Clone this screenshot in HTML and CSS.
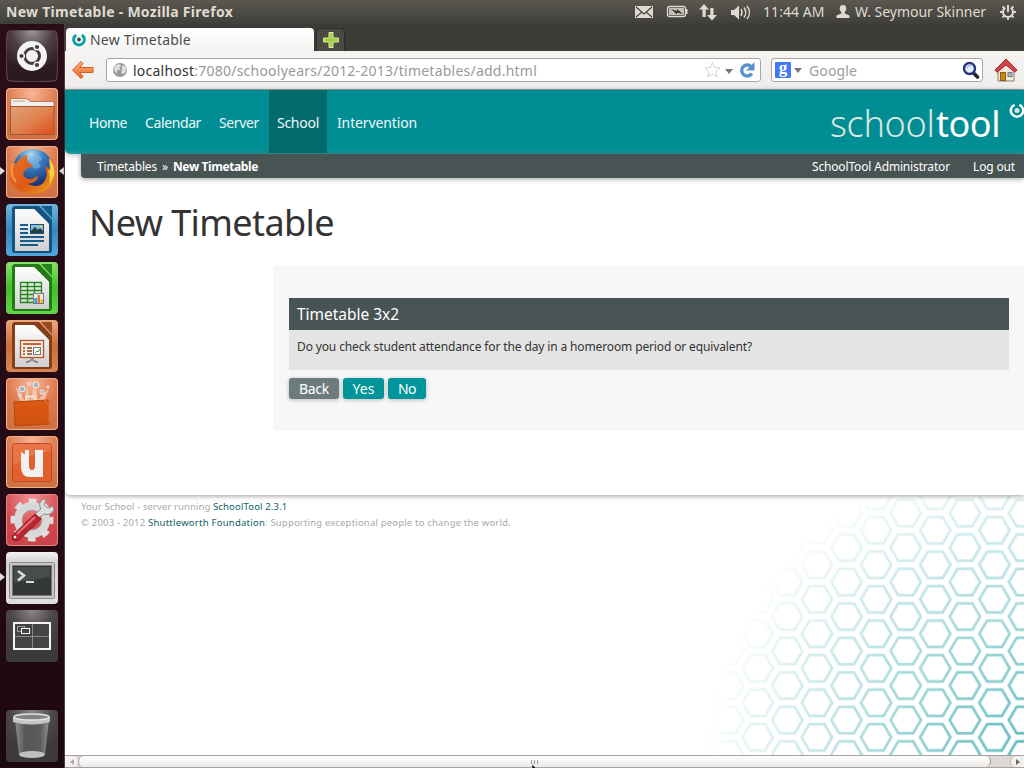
FILE: index.html
```
<!DOCTYPE html>
<html lang="en">
<head>
<meta charset="utf-8">
<title>New Timetable</title>
<link rel="stylesheet" href="styles.css">
</head>
<body>
<svg class="defs" width="0" height="0" aria-hidden="true">
  <defs>
    <radialGradient id="orange" cx=".5" cy=".1" r=".95"><stop offset="0" stop-color="#f9b594"/><stop offset=".5" stop-color="#dd7b50"/><stop offset="1" stop-color="#cf7040"/></radialGradient>
    <radialGradient id="dark" cx=".5" cy="0" r=".8"><stop offset="0" stop-color="#8c8686"/><stop offset=".5" stop-color="#4b4848"/><stop offset="1" stop-color="#3c3a3a"/></radialGradient>
    <radialGradient id="dash" cx=".5" cy="0" r=".8"><stop offset="0" stop-color="#a19a9b"/><stop offset=".5" stop-color="#4c3f42"/><stop offset="1" stop-color="#2b1b1f"/></radialGradient>
    <linearGradient id="blue" x2="0" y2="1"><stop offset="0" stop-color="#6fb5df"/><stop offset=".5" stop-color="#3689bd"/><stop offset="1" stop-color="#4fa8dc"/></linearGradient>
    <linearGradient id="green" x2="0" y2="1"><stop offset="0" stop-color="#8be36d"/><stop offset=".5" stop-color="#43bd2b"/><stop offset="1" stop-color="#62d448"/></linearGradient>
    <linearGradient id="brown" x2="0" y2="1"><stop offset="0" stop-color="#eba77e"/><stop offset=".5" stop-color="#c96f3d"/><stop offset="1" stop-color="#d98553"/></linearGradient>
    <radialGradient id="red" cx=".5" cy=".1" r=".95"><stop offset="0" stop-color="#f29391"/><stop offset=".6" stop-color="#d14a50"/><stop offset="1" stop-color="#c9424a"/></radialGradient>
    <linearGradient id="silver" x2="0" y2="1"><stop offset="0" stop-color="#f3f3f3"/><stop offset=".2" stop-color="#d4d4d4"/><stop offset="1" stop-color="#e0e0e0"/></linearGradient>
    <linearGradient id="paper" x2="0" y2="1"><stop offset="0" stop-color="#ffffff"/><stop offset="1" stop-color="#cfcfcf"/></linearGradient>
    <linearGradient id="folder" x2="1" y2="1"><stop offset="0" stop-color="#dfa078"/><stop offset=".5" stop-color="#e08250"/><stop offset="1" stop-color="#dc4e1c"/></linearGradient>
    <linearGradient id="bag" x2="0" y2="1"><stop offset="0" stop-color="#dc5a14"/><stop offset="1" stop-color="#d05010"/></linearGradient>
    <radialGradient id="globe" cx=".45" cy=".15" r=".8"><stop offset="0" stop-color="#b5dcf2"/><stop offset=".4" stop-color="#3a7cc0"/><stop offset="1" stop-color="#142b6b"/></radialGradient>
    <linearGradient id="fox" x2="1" y2="1"><stop offset="0" stop-color="#e8702a"/><stop offset=".55" stop-color="#dd5a15"/><stop offset="1" stop-color="#f2a623"/></linearGradient>
    <linearGradient id="bin" x2="1" y2="0"><stop offset="0" stop-color="#8f8f8f"/><stop offset=".3" stop-color="#565656"/><stop offset=".75" stop-color="#5d5d5d"/><stop offset="1" stop-color="#929292"/></linearGradient>
    <linearGradient id="arrow" x2="0" y2="1"><stop offset="0" stop-color="#fbb471"/><stop offset="1" stop-color="#e8672c"/></linearGradient>
  </defs>
</svg>
<div class="screen">
  <header class="panel">
    <span class="panel-title">New Timetable - Mozilla Firefox</span>
    <svg class="tray" width="120" height="24" viewBox="634 0 120 24">
      <rect x="635" y="6" width="18" height="12" fill="#dfdbd2"/><path d="M636 7l8 7 8-7M636 17l6-5M652 17l-6-5" fill="none" stroke="#45433c" stroke-width="1.2"/>
      <rect x="667.5" y="6.500" width="18" height="10" rx="2" fill="none" stroke="#dfdbd2" stroke-width="1.3"/><rect x="669" y="8" width="15" height="7" fill="#c4c0b7"/><path d="M686 9h1.500v5H686" fill="#dfdbd2"/><path d="M671 9l6 2v-2l6 5-6-1.500v2z" fill="#33322e"/>
      <path d="M704 4l5 5.500h-3.300V17h-3.200V9.500h-3.500zM712 20.500l-5-5.500h3.300V8h3.200v7h3.500z" fill="#dfdbd2"/>
      <path d="M731 10h3l5-4.500v14l-5-4.500h-3z" fill="#dfdbd2"/><path d="M741 9q2 3.500 0 7M744 7.500q3.500 5 0 10M747 6q5 6.500 0 13" fill="none" stroke="#dfdbd2" stroke-width="1.400"/>
    </svg>
    <span class="clock">11:44 AM</span>
    <svg class="person" width="14" height="24" viewBox="0 0 14 24"><path d="M7 5c2.300 0 3.500 1.600 3.300 3.800-.2 1.700-1 2.700-1.600 3.300v1.500L13.500 15.500V18H.5v-2.500l4.800-1.900v-1.500C4.700 11.500 3.900 10.500 3.700 8.800 3.500 6.600 4.700 5 7 5z" fill="#dfdbd2"/></svg>
    <span class="user">W. Seymour Skinner</span>
    <svg class="gear" width="16" height="24" viewBox="0 0 16 24"><path d="M5.300 7.800a5 5 0 1 0 5.400 0" fill="none" stroke="#dfdbd2" stroke-width="2"/><path d="M8 5v7" stroke="#dfdbd2" stroke-width="2"/><path d="M8 17v3M0 12h3M13 12h3M2.500 6.500l2 2M13.500 6.500l-2 2M2.500 17.500l2-2M13.500 17.500l-2-2" stroke="#dfdbd2" stroke-width="1.800"/></svg>
  </header>

  <div class="desktop">
    <nav class="launcher">
      <svg class="tile" viewBox="0 0 52 52"><path d="M4 1Q26-1 48 1Q51 1 51 4Q53 26 51 48Q51 51 48 51Q26 53 4 51Q1 51 1 48Q-1 26 1 4Q1 1 4 1Z" fill="url(#dash)" stroke="#5b5054"/><circle cx="26" cy="26" r="15" fill="#f3f3f3"/><circle cx="26" cy="26" r="7.500" fill="none" stroke="#47393c" stroke-width="3"/><g stroke="#f3f3f3" stroke-width="1.500"><circle cx="15.500" cy="26" r="2.800" fill="#47393c"/><circle cx="31" cy="17" r="2.800" fill="#47393c"/><circle cx="31" cy="35" r="2.800" fill="#47393c"/></g></svg>
      <svg class="tile" viewBox="0 0 52 52"><rect width="52" height="52" rx="4" fill="url(#orange)"/><rect x=".5" y=".5" width="51" height="51" rx="4" fill="none" stroke="#f3b18d"/><path d="M4.500 47V12q0-1.500 1.500-1.500h14l5 3H47q1 0 1 1.500v32z" fill="#efefef" stroke="#b97b5b"/><path d="M7 13h12" stroke="#e09a73"/><rect x="4.500" y="18.500" width="43.500" height="28" fill="url(#folder)" stroke="#a5552e"/></svg>
      <svg class="tile" viewBox="0 0 52 52"><rect width="52" height="52" rx="4" fill="url(#orange)"/><rect x=".5" y=".5" width="51" height="51" rx="4" fill="none" stroke="#f3b18d"/><circle cx="27" cy="23" r="20" fill="url(#globe)"/><path d="M25 10q8-2 11 3l-4 3 3 5-6 2-5-4z" fill="#7fb6dc" opacity=".6"/><path d="M43 12Q50 20 49 29Q46 47 28 48Q10 48 4 34Q2 25 7 15L10 18Q14 11 21 9L21 15L27 20L20 23L17 28Q19 34 26 33L32 30Q32 36 22 38Q32 43 38 36Q43 29 39 20L44 23Q44 16 43 12Z" fill="url(#fox)"/><path d="M43 12q7 9 5 18l-5 10q2-9-1-16l2 1q0-6-1-13z" fill="#f5cf3d"/><path d="M7 17q-4 11 3 19" fill="none" stroke="#f39b41" stroke-width="2"/></svg>
      <svg class="tile" viewBox="0 0 52 52"><rect width="52" height="52" rx="4" fill="url(#blue)"/><path d="M8 2h25l13 14v30q0 3-3 3H9q-3 0-3-3V4z" fill="#155280"/><path d="M35 2h11v12z" fill="#155b8b"/><path d="M9 5h19l15 15v27H9z" fill="url(#paper)"/><path d="M28 5l15 15-11-7z" fill="#f7fafc"/><path d="M14 21h8M14 25h8M14 29h8M14 33h24M14 37h24M14 41h18" stroke="#155b8b" stroke-width="2"/><rect x="24.500" y="20.500" width="13" height="9" fill="#80bde3" stroke="#155280"/><path d="M25 29v-2l4-4 3 3 2-2 3 3v2z" fill="#293b42"/><circle cx="35" cy="22.500" r="1.500" fill="#efc75e"/></svg>
      <svg class="tile" viewBox="0 0 52 52"><rect width="52" height="52" rx="4" fill="url(#green)"/><path d="M8 2h25l13 14v30q0 3-3 3H9q-3 0-3-3V4z" fill="#217a16"/><path d="M35 2h11v12z" fill="#27841a"/><path d="M9 5h19l15 15v27H9z" fill="url(#paper)"/><path d="M28 5l15 15-11-7z" fill="#f7fcf7"/><path d="M14.500 20.500h21v20h-21zM14 24.500h22M14 28.500h22M14 32.500h22M14 36.500h22M21.500 20v21M28.500 20v21" fill="none" stroke="#23881b" stroke-width="1.300"/><rect x="27.500" y="31.500" width="10" height="10" fill="#eee" stroke="#777"/><path d="M28.500 36h2.500v5h-2.500z" fill="#2b9fdf"/><path d="M31.500 33h2.500v8h-2.500z" fill="#d97b35"/><path d="M34.500 37.500H37V41h-2.500z" fill="#e8ba21"/></svg>
      <svg class="tile" viewBox="0 0 52 52"><rect width="52" height="52" rx="4" fill="url(#brown)"/><path d="M8 2h25l13 14v30q0 3-3 3H9q-3 0-3-3V4z" fill="#843f19"/><path d="M35 2h11v12z" fill="#96481e"/><path d="M9 5h19l15 15v27H9z" fill="url(#paper)"/><path d="M28 5l15 15-11-7z" fill="#fcfaf7"/><rect x="14.500" y="20.500" width="23" height="17" fill="#f5eee9" stroke="#b45325" stroke-width="1.300"/><path d="M17 24h18" stroke="#bd5424" stroke-width="1.800"/><path d="M17 28h2M17 31h2M17 34h2M21 28h5M21 31h5M21 34h5" stroke="#913f18" stroke-width="1.700"/><rect x="27.500" y="27.500" width="7" height="7" fill="#fff" stroke="#777"/><path d="M29 33l2-2 1 1 2-3" fill="none" stroke="#27a33a"/><path d="M20 42q5 0 6-4q1 4 6 4" fill="none" stroke="#888" stroke-width="1.800"/></svg>
      <svg class="tile" viewBox="0 0 52 52"><rect width="52" height="52" rx="4" fill="url(#orange)"/><rect x=".5" y=".5" width="51" height="51" rx="4" fill="none" stroke="#f3b18d"/><path d="M9 7l10 16 2-15 3 15L29 5l3 17 11-12-5 14H14z" fill="#f8d3ba" opacity=".7"/><g fill="#9fb9c4" stroke="#f4f0ee"><circle cx="16" cy="11" r="3"/><circle cx="30" cy="7" r="3"/><circle cx="23" cy="6" r="1.500"/><circle cx="36" cy="14" r="2"/><circle cx="14" cy="17" r="1.500"/><circle cx="42" cy="9" r="1"/></g><path d="M20 23v-4.500h9V23" fill="none" stroke="#f5e2d4" stroke-width="2"/><path d="M8 24l34-2 1 24-34 2z" fill="url(#bag)" stroke="#b9460d"/><path d="M39 22l4 6v17" fill="none" stroke="#e47a42"/></svg>
      <svg class="tile" viewBox="0 0 52 52"><rect width="52" height="52" rx="4" fill="url(#orange)"/><rect x=".5" y=".5" width="51" height="51" rx="4" fill="none" stroke="#f3b18d"/><rect x="6.500" y="7.500" width="39" height="38" rx="2" fill="#e45f2e" stroke="#b94c24"/><path d="M7 8h38v7Q25 17 7 30z" fill="#f18a5f" opacity=".5"/><path d="M15 16l5-2h3v16q0 4 3 4t3-4V14h8v27H24q-9 0-9-10z" fill="#f1f1f1"/><path d="M15 16l4 2.500V14z" fill="#e9703f"/></svg>
      <svg class="tile" viewBox="0 0 52 52"><rect width="52" height="52" rx="4" fill="url(#red)"/><rect x=".5" y=".5" width="51" height="51" rx="4" fill="none" stroke="#e98785"/><circle cx="26" cy="26" r="14" fill="none" stroke="#d8d8d8" stroke-width="8"/><circle cx="26" cy="26" r="19" fill="none" stroke="#dedede" stroke-width="5" stroke-dasharray="7.460 7.460" stroke-dashoffset="3.700"/><circle cx="26" cy="26" r="10" fill="none" stroke="#aaa"/><path d="M31 25L28 21 35 15q-4-7 3-10l2 1-2 5 4 3 5-2 1 4q-3 6-10 4z" fill="#ddd" stroke="#8a8a8a"/><path d="M7 41L29 20l6 5-22 21q-4 2-6 0-2-2 0-5z" fill="#b82834" stroke="#8b1824"/><path d="M11 40L29 23" stroke="#e5707a" stroke-width="2"/><circle cx="9" cy="43" r="1.300" fill="#fff"/></svg>
      <svg class="tile" viewBox="0 0 52 52"><rect width="52" height="52" rx="4" fill="url(#silver)"/><rect x="3.500" y="10.500" width="45" height="36" rx="1" fill="#c6c6c6" stroke="#888"/><rect x="6.500" y="13.500" width="39" height="30" fill="#333736" stroke="#777"/><path d="M8 15h36v10L8 31z" fill="#5b5f5e" opacity=".55"/><path d="M12 19l6 4.500-6 5" fill="none" stroke="#ddd" stroke-width="2.600"/><path d="M20 30h8" stroke="#ddd" stroke-width="2"/></svg>
      <svg class="tile" viewBox="0 0 52 52"><rect width="52" height="52" rx="4" fill="url(#dark)"/><rect x="8" y="13" width="36" height="26" fill="#454343" stroke="#f4f4f4" stroke-width="2"/><path d="M26.500 14v24M9 26.500h34" stroke="#898989"/><rect x="11.500" y="16.500" width="7" height="5" fill="none" stroke="#999"/><rect x="15.500" y="18.500" width="8" height="5" fill="#454343" stroke="#f4f4f4"/></svg>
      <svg class="tile tile-trash" viewBox="0 0 52 52"><rect width="52" height="52" rx="4" fill="url(#dark)"/><path d="M9 9l4 36q13 5 26 0l4-36z" fill="url(#bin)"/><ellipse cx="26" cy="44.500" rx="13" ry="3.500" fill="#bfc0be"/><path d="M7 7v5q19 5 37 0V7z" fill="#c4c4c4"/><ellipse cx="25.500" cy="7" rx="17.500" ry="3" fill="#848484" stroke="#e2e2e2" stroke-width="1.500"/></svg>
      <i class="pip pip-firefox"></i><i class="pip pip-focus"></i><i class="pip pip-terminal"></i>
    </nav>

    <div class="browser">
      <div class="tabs">
        <div class="tab">
          <svg width="16" height="16" viewBox="0 0 16 16"><path d="M5.200 3A5.400 5.400 0 1 0 10.800 3" fill="none" stroke="#0ba3a8" stroke-width="3"/><circle cx="8" cy="7.500" r="2" fill="#414949"/></svg>
          <span class="tab-title">New Timetable</span>
        </div>
        <div class="tab-add"><svg width="18" height="18" viewBox="0 0 18 18"><path d="M7 1.500h4V7h5.500v4H11v5.500H7V11H1.500V7H7z" fill="#a7ce3c" stroke="#dcecae" stroke-width="1"/></svg></div>
      </div>
      <div class="toolbar">
        <svg class="back" width="24" height="20" viewBox="0 0 24 20"><path d="M10 1.500L1.500 10l8.500 8.500 2-2-3.500-4h13.500v-5H8.500l3.500-4z" fill="url(#arrow)" stroke="#d65c28" stroke-linejoin="round"/></svg>
        <div class="field url">
          <svg width="16" height="16" viewBox="0 0 16 16"><circle cx="8" cy="8" r="7" fill="#999"/><path d="M2.500 4l4-2 3 1.500-2 2 1 2-3.500 1L5 12 2 8zM10 4l3-.5L14.500 8 12 12l-3-1 1-3z" fill="#dedede"/></svg>
          <span class="url-text"><b>localhost</b>:7080/schoolyears/2012-2013/timetables/add.html</span>
          <svg class="url-tools" width="54" height="22" viewBox="0 0 54 22"><path d="M8.500 3.500l2.200 5 5.300.5-4 3.600 1.200 5.400-4.700-2.800L3.800 18 5 12.600 1 9l5.300-.5z" fill="#fff" stroke="#d0d0d0"/><path d="M21 10h8l-4 5z" fill="#777"/><path d="M47 7.500A5.500 5.500 0 1 0 47.800 14.500" fill="none" stroke="#5794cc" stroke-width="3.400"/><path d="M50.500 3v8.500H42z" fill="#5794cc"/></svg>
        </div>
        <div class="field search">
          <span class="g">g</span><span class="chevron"></span><span class="search-text">Google</span>
          <svg class="lens" width="18" height="18" viewBox="0 0 18 18"><path d="M11 11.500l4.500 4.500" stroke="#26272d" stroke-width="3.600" stroke-linecap="round"/><circle cx="7.500" cy="7.500" r="5.500" fill="#e5eefb" stroke="#27377e" stroke-width="2.400"/><path d="M5 7q1-3 4-2" stroke="#7ea2dc" fill="none"/></svg>
        </div>
        <svg class="home" width="24" height="24" viewBox="0 0 24 24"><path d="M4 11l8-8 8 8v12H4z" fill="#efebe1" stroke="#8b7c6a"/><rect x="6.500" y="14.500" width="5" height="8" fill="#c8870f" stroke="#8f5c12"/><rect x="14" y="14.500" width="4" height="4" fill="#9db9cf" stroke="#777"/><path d="M12 1L1 12l2 2.300L12 7l9 7.300 2-2.300z" fill="#d24343" stroke="#a82c2c" stroke-linejoin="round"/></svg>
      </div>

      <div class="page">
        <main class="main">
          <div class="masthead">
            <div class="menu">
              <a class="m-home">Home</a><a class="m-cal">Calendar</a><a class="m-server">Server</a><a class="m-school">School</a><a class="m-int">Intervention</a>
            </div>
            <div class="logo"><span class="logo-a">school</span><span class="logo-b">tool</span><svg width="16" height="18" viewBox="0 0 16 18"><path d="M5.600 2.800A6.200 6.200 0 1 0 10.400 2.800" fill="none" stroke="#fff" stroke-width="2.400"/><circle cx="8" cy="8.500" r="2.500" fill="#dfe3de"/></svg></div>
          </div>
          <div class="crumbs">
            <span class="crumb">Timetables</span><span class="sep">»</span><b class="crumb-here">New Timetable</b>
            <span class="admin">SchoolTool Administrator</span><span class="logout">Log out</span>
          </div>
          <h1>New Timetable</h1>
          <section class="content">
            <h3>Timetable 3x2</h3>
            <p class="question">Do you check student attendance for the day in a homeroom period or equivalent?</p>
            <div class="buttons"><button class="btn btn-back">Back</button><button class="btn btn-yes">Yes</button><button class="btn btn-no">No</button></div>
          </section>
        </main>
        <footer class="footer">
          <div class="credits">
            <p><span class="f1">Your School - server running </span><a class="f2">SchoolTool 2.3.1</a></p>
            <p><span class="f3">© 2003 - 2012 </span><a class="f4">Shuttleworth Foundation</a><span class="f5">: Supporting exceptional people to change the world.</span></p>
          </div>
          <svg class="hexes" width="324" height="259" viewBox="0 0 324 259">
            <defs>
              <pattern id="hex" width="59.2" height="34.5" patternUnits="userSpaceOnUse" patternTransform="translate(205.7 17.05)">
                <g fill="none" stroke="#0a969c" stroke-width="2.700">
                  <path id="h" d="M14.400 17.250L22.200 3.950H37L44.800 17.250 37 30.550H22.200z"/>
                  <use href="#h" x="-29.6" y="-17.25"/><use href="#h" x="29.6" y="-17.25"/><use href="#h" x="-29.6" y="17.25"/><use href="#h" x="29.6" y="17.25"/>
                </g>
              </pattern>
              <radialGradient id="fade" gradientUnits="userSpaceOnUse" cx="350" cy="285" r="348"><stop offset="0" stop-color="#fff" stop-opacity=".74"/><stop offset=".5" stop-color="#fff" stop-opacity=".36"/><stop offset=".8" stop-color="#fff" stop-opacity=".15"/><stop offset="1" stop-color="#fff" stop-opacity="0"/></radialGradient>
              <mask id="m" mask-type="alpha"><rect width="324" height="259" fill="url(#fade)"/></mask>
            </defs>
            <rect width="324" height="259" fill="url(#hex)" mask="url(#m)"/>
          </svg>
        </footer>
      </div>
      <div class="scrollbar"><span class="sb sb-left"></span><span class="thumb"><i></i><i></i><i></i></span><span class="sb sb-right"></span></div>
    </div>
  </div>
  <svg class="cursor" width="7" height="5" viewBox="0 0 7 5"><path d="M1 0v5h5z" fill="#111" stroke="#fff" stroke-width=".5"/></svg>
</div>
</body>
</html>
```
FILE: styles.css
```
* { box-sizing: border-box; }
body { margin: 0; font-family: "Noto Sans", "Open Sans", sans-serif; font-size: 14px; color: #333; }
h1, h3, p { margin: 0; font-weight: 400; }
svg { display: block; flex: none; }
span, a, b { white-space: pre; }
.defs { position: absolute; }
.screen { position: relative; width: 1024px; height: 768px; overflow: hidden; display: flex; flex-direction: column; background: #3c3b37; }

/* Top panel */
.panel { flex: 0 0 24px; height: 24px; display: flex; align-items: center; padding: 0 8px 0 6px; background: linear-gradient(#5a5850, #3f3e39); color: #dfdbd2; line-height: 24px; }
.panel-title { font-weight: 700; letter-spacing: .277px; }
.tray { margin-left: auto; margin-right: 9px; }
.clock { width: 73px; letter-spacing: .06px; }
.person { margin-right: 5px; }
.user { width: 145px; letter-spacing: -.03px; }

.desktop { flex: 1; min-height: 0; display: flex; }

/* Launcher */
.launcher { position: relative; flex: 0 0 65px; display: flex; flex-direction: column; gap: 6px; padding: 6px; background: linear-gradient(#2a0d15, #250b16 60%, #1e080f); border-right: 1px solid #563945; }
.tile { width: 52px; height: 52px; }
.tile-trash { margin-top: auto; }
.pip { position: absolute; width: 0; height: 0; border: 4px solid transparent; }
.pip-firefox { left: 0; top: 143px; border-left: 5px solid #ddd; border-right: 0; }
.pip-focus { right: 0; top: 143px; border-right: 5px solid #ddd; border-left: 0; }
.pip-terminal { left: 0; top: 549px; border-left: 5px solid #ddd; border-right: 0; }

/* Browser chrome */
.browser { flex: 1; min-width: 0; display: flex; flex-direction: column; background: #fff; }
.tabs { flex: 0 0 27px; display: flex; padding: 4px 0 0 1px; gap: 2px; background: #3c3b37; }
.tab { width: 248px; height: 23px; display: flex; align-items: center; gap: 3px; padding-left: 5px; border-radius: 4px 4px 0 0; background: linear-gradient(#fff, #f4f3f2); color: #4c4c4c; }
.tab-title { letter-spacing: .2px; line-height: 22px; }
.tab-add { width: 29px; height: 23px; display: flex; justify-content: center; align-items: center; background: #4b4943; border: 1px solid #2e2d2a; border-bottom: 0; border-radius: 4px 4px 0 0; }
.toolbar { flex: 0 0 39px; display: flex; align-items: center; padding: 0 6px 0 6px; background: linear-gradient(#f5f4f2, #efedeb); border-bottom: 1px solid #a4a19e; }
.back { margin-right: 11px; }
.field { height: 24px; display: flex; align-items: center; background: #fff; border: 1px solid #aaa59f; border-radius: 3px; }
.url { width: 655px; padding: 0 2px 0 5px; }
.url-text { margin-left: 5px; color: #999; letter-spacing: .233px; }
.url-text b { font-weight: 400; color: #333; }
.url-tools { margin-left: auto; }
.search { width: 212px; margin-left: 10px; padding: 0 2px 0 3px; }
.g { width: 16px; height: 16px; border-radius: 1px; background: #4379f2; color: #fff; font: 700 17px/12px "Liberation Serif", serif; text-align: center; }
.chevron { margin: 1px 7px 0 3px; border: 4px solid transparent; border-top: 5px solid #777; border-bottom: 0; }
.search-text { color: #a09c98; letter-spacing: .125px; }
.lens { margin-left: auto; }
.home { margin-left: 11px; }

/* Page */
.page { flex: 1; min-height: 0; display: flex; flex-direction: column; background: #fff; }
.main { position: relative; height: 405px; background: #fff; border-bottom-left-radius: 5px; box-shadow: 0 1px 5px rgba(0,0,0,.4); }
.masthead { height: 64px; display: flex; justify-content: space-between; background: linear-gradient(#008e94 0 60px, #2b9a9f); border-bottom-left-radius: 5px; box-shadow: -1px 2px 5px rgba(0,0,0,.2); }
.menu { display: flex; gap: 2px; padding-left: 16px; line-height: 65px; color: #eef8f8; }
.menu a { padding-left: 8px; height: 63px; }
.m-home { width: 54px; letter-spacing: -.457px; }
.m-cal { width: 72px; letter-spacing: -.388px; }
.m-server { width: 56px; letter-spacing: -.359px; }
.m-school { width: 58px; letter-spacing: -.268px; background: #046b6d; }
.m-int { letter-spacing: -.131px; }
.logo { display: flex; margin-right: -1px; color: #fff; font-size: 36px; line-height: 67px; }
.logo-a { width: 106px; font-weight: 350; letter-spacing: -.3px; color: #dde5df; }
.logo-b { width: 73px; letter-spacing: -.46px; }
.logo svg { margin-top: 12px; }
.crumbs { position: relative; display: flex; height: 24px; margin-left: 16px; padding: 0 9px 0 16px; background: #485353; color: #fff; font-size: 12px; line-height: 25px; border-bottom-left-radius: 4px; box-shadow: 0 1px 5px rgba(0,0,0,.4); }
.crumb { width: 65px; letter-spacing: -.181px; }
.sep { width: 11px; }
.crumb-here { letter-spacing: -.398px; }
.admin { margin-left: auto; width: 161px; letter-spacing: -.163px; }
.logout { width: 42px; letter-spacing: -.151px; }
h1 { height: 88px; padding-left: 24px; color: #333; font-size: 36px; line-height: 90px; letter-spacing: -.6px; }
.content { height: 165px; margin-left: 208px; padding: 32px 15px 0 16px; background: #f7f7f7; }
h3 { height: 32px; padding-left: 8px; background: #485353; color: #fff; font-size: 15.5px; line-height: 32px; letter-spacing: -.03px; }
.question { height: 40px; padding-left: 8px; background: #e4e4e4; font-size: 12px; line-height: 33px; letter-spacing: -.131px; }
.buttons { display: flex; gap: 4px; padding-top: 8px; }
.btn { height: 21px; padding: 0; border: 0; border-radius: 3px; background: #00959a; color: #fff; font: 14px/21px "Noto Sans", sans-serif; box-shadow: 0 1px 4px rgba(0,0,0,.25); }
.btn-back { width: 50px; background: #6c7c7c; letter-spacing: -.287px; }
.btn-yes { width: 41px; }
.btn-no { width: 38px; letter-spacing: -.5px; }
.footer { flex: 1; display: flex; justify-content: space-between; padding-top: 1px; }
.credits { padding: 3px 0 0 16px; color: #a9a9a9; font-size: 9.5px; line-height: 16px; white-space: nowrap; }
.credits a { color: #0d6065; }
.f1 { letter-spacing: .1px; }
.f2 { letter-spacing: .15px; }
.f3 { letter-spacing: .192px; }
.f4 { letter-spacing: .242px; }
.f5 { letter-spacing: .185px; }
.hexes { margin-left: -200px; }

/* Horizontal scrollbar */
.scrollbar { flex: 0 0 13px; display: flex; background: #dcd8d5; border-top: 1px solid #a7a29d; border-bottom: 1px solid #a7a29d; }
.sb { width: 14px; display: flex; align-items: center; justify-content: center; background: #f3f1f0; }
.sb-left { width: 13px; border-radius: 0 6px 6px 0; }
.sb::before { content: ""; border: 3px solid transparent; }
.sb-left::before { border-right: 4px solid #aaa; border-left: 0; }
.sb-right { margin-left: auto; border-left: 1px solid #b3aea9; border-radius: 6px 0 0 6px; }
.sb-right::before { border-left: 4px solid #666; border-right: 0; }
.thumb { width: 913px; display: flex; align-items: center; justify-content: center; gap: 2px; border: 1px solid #9c9792; border-width: 0 1px; border-radius: 6px; background: linear-gradient(#fff, #eceae8); }
.thumb i { width: 1px; height: 4px; background: #999; }
.cursor { position: absolute; left: 531px; top: 764px; }
```
